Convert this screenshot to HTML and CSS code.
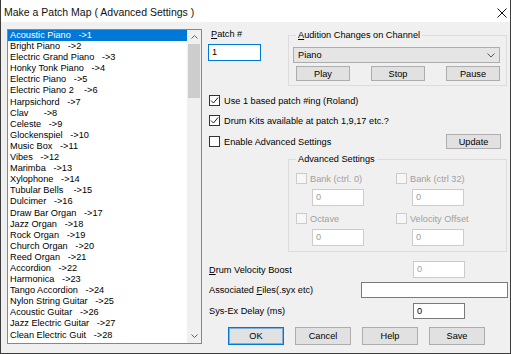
FILE: index.html
```html
<!DOCTYPE html>
<html>
<head>
    <link rel="stylesheet" href="styles.css">
</head>
<body>
<div class="window">
    <div class="titlebar">
        <span class="title">Make a Patch Map ( Advanced Settings )</span>
        <svg class="close" width="10" height="10" viewBox="0 0 10 10"><path d="M0.5 0.5 L9.5 9.5 M9.5 0.5 L0.5 9.5" stroke="#111" stroke-width="1" fill="none"/></svg>
    </div>
    <div class="content">
        <div class="list">
            <div class="items">
                <div class="item sel">Acoustic Piano   -&gt;1</div>
                <div class="item">Bright Piano   -&gt;2</div>
                <div class="item">Electric Grand Piano   -&gt;3</div>
                <div class="item">Honky Tonk Piano   -&gt;4</div>
                <div class="item">Electric Piano   -&gt;5</div>
                <div class="item">Electric Piano 2    -&gt;6</div>
                <div class="item">Harpsichord   -&gt;7</div>
                <div class="item">Clav      -&gt;8</div>
                <div class="item">Celeste   -&gt;9</div>
                <div class="item">Glockenspiel   -&gt;10</div>
                <div class="item">Music Box   -&gt;11</div>
                <div class="item">Vibes   -&gt;12</div>
                <div class="item">Marimba   -&gt;13</div>
                <div class="item">Xylophone   -&gt;14</div>
                <div class="item">Tubular Bells    -&gt;15</div>
                <div class="item">Dulcimer   -&gt;16</div>
                <div class="item">Draw Bar Organ   -&gt;17</div>
                <div class="item">Jazz Organ   -&gt;18</div>
                <div class="item">Rock Organ   -&gt;19</div>
                <div class="item">Church Organ   -&gt;20</div>
                <div class="item">Reed Organ   -&gt;21</div>
                <div class="item">Accordion   -&gt;22</div>
                <div class="item">Harmonica   -&gt;23</div>
                <div class="item">Tango Accordion   -&gt;24</div>
                <div class="item">Nylon String Guitar   -&gt;25</div>
                <div class="item">Acoustic Guitar   -&gt;26</div>
                <div class="item">Jazz Electric Guitar   -&gt;27</div>
                <div class="item">Clean Electric Guit   -&gt;28</div>
            </div>
            <div class="scroll">
                <div class="arrow"><svg width="7" height="4" viewBox="0 0 7 4"><path d="M0.5 3.5 L3.5 0.5 L6.5 3.5" stroke="#606060" fill="none"/></svg></div>
                <div class="thumb"></div>
                <div class="track"></div>
                <div class="arrow"><svg width="7" height="4" viewBox="0 0 7 4"><path d="M0.5 0.5 L3.5 3.5 L6.5 0.5" stroke="#606060" fill="none"/></svg></div>
            </div>
        </div>

        <div class="panel">
            <div class="toprow">
                <div class="patch">
                    <div class="lbl"><u>P</u>atch #</div>
                    <div class="edit focus patchedit">1</div>
                </div>
                <div class="group audition">
                    <span class="legend"><u>A</u>udition Changes on Channel</span>
                    <div class="combo">
                        <span>Piano</span>
                        <svg width="8" height="5" viewBox="0 0 8 5"><path d="M0.5 0.5 L4 4 L7.5 0.5" stroke="#555" fill="none"/></svg>
                    </div>
                    <div class="btnrow">
                        <button class="btn small">Play</button>
                        <button class="btn small">Stop</button>
                        <button class="btn small">Pause</button>
                    </div>
                </div>
            </div>

            <div class="check first">
                <span class="box"><svg width="9" height="9" viewBox="0 0 9 9"><path d="M1 4.5 L3.5 7 L8 1.5" stroke="#222" stroke-width="1" fill="none"/></svg></span>
                <span>Use 1 based patch #ing (Roland)</span>
            </div>
            <div class="check">
                <span class="box"><svg width="9" height="9" viewBox="0 0 9 9"><path d="M1 4.5 L3.5 7 L8 1.5" stroke="#222" stroke-width="1" fill="none"/></svg></span>
                <span>Drum Kits available at patch 1,9,17 etc.?</span>
            </div>
            <div class="check enable">
                <span class="box"></span>
                <span>Enable Advanced Settings</span>
                <button class="btn update">Update</button>
            </div>

            <div class="group advanced">
                <span class="legend">Advanced Settings</span>
                <div class="advgrid">
                    <div class="cell">
                        <div class="check off"><span class="box"></span><span>Bank (ctrl. 0)</span></div>
                        <div class="edit off small">0</div>
                    </div>
                    <div class="cell">
                        <div class="check off"><span class="box"></span><span>Bank (ctrl 32)</span></div>
                        <div class="edit off small">0</div>
                    </div>
                    <div class="cell">
                        <div class="check off"><span class="box"></span><span>Octave</span></div>
                        <div class="edit off small">0</div>
                    </div>
                    <div class="cell">
                        <div class="check off"><span class="box"></span><span>Velocity Offset</span></div>
                        <div class="edit off small">0</div>
                    </div>
                </div>
            </div>

            <div class="field drum">
                <span><u>D</u>rum Velocity Boost</span>
                <div class="edit off short">0</div>
            </div>
            <div class="field assoc">
                <span>Associated <u>F</u>iles(.syx etc)</span>
                <div class="edit long"></div>
            </div>
            <div class="field sysex">
                <span>Sys-Ex Delay (ms)</span>
                <div class="edit short">0</div>
            </div>

            <div class="buttons">
                <button class="btn dlg default">OK</button>
                <button class="btn dlg">Cancel</button>
                <button class="btn dlg">Help</button>
                <button class="btn dlg">Save</button>
            </div>
        </div>
    </div>
</div>
</body>
</html>
```

FILE: styles.css
```css
*
{
    box-sizing: border-box;
}
body
{
    margin: 0;
    font-family: "Liberation Sans", Arial, sans-serif;
    font-size: 9.2px;
    color: #000;
}
.window
{
    width: 511px;
    height: 354px;
    background-color: #f0f0f0;
    border: 1px solid #3c3c3c;
    border-top: none;
    display: flex;
    flex-direction: column;
}
.titlebar
{
    height: 22px;
    background-color: #fff;
    display: flex;
    align-items: center;
    padding-left: 3px;
    padding-top: 1px;
}
.title
{
    font-size: 10.5px;
    color: #111;
}
.close
{
    margin-left: auto;
    margin-right: 3px;
    margin-top: 2px;
}
.content
{
    display: flex;
    padding: 7px 0 0 6px;
}

/* list box */
.list
{
    width: 195px;
    height: 315px;
    border: 1px solid #828790;
    background-color: #fff;
    display: flex;
    overflow: hidden;
}
.items
{
    flex: 1;
    line-height: 11.1px;
    overflow: hidden;
}
.item
{
    padding-left: 2px;
    height: 11.1px;
    white-space: pre;
}
.item.sel
{
    background-color: #0078d7;
    color: #fff;
}
.scroll
{
    width: 14px;
    background-color: #f0f0f0;
    display: flex;
    flex-direction: column;
}
.arrow
{
    height: 14px;
    display: flex;
    align-items: center;
    justify-content: center;
}
.thumb
{
    height: 54px;
    margin: 0 1px;
    background-color: #cdcdcd;
}
.track
{
    flex: 1;
}

/* right side */
.panel
{
    margin-left: 6px;
    width: 300px;
}
.toprow
{
    display: flex;
    height: 57px;
}
.patch
{
    width: 80px;
}
.lbl
{
    line-height: 11px;
    margin-left: 3px;
}
.edit
{
    height: 16px;
    background-color: #fff;
    border: 1px solid #7a7a7a;
    padding-left: 3px;
    line-height: 14px;
}
.edit.focus
{
    border-color: #0078d7;
}
.patchedit
{
    margin-top: 4px;
    width: 53px;
    height: 17px;
}
.edit.off
{
    border-color: #cccccc;
    color: #a0a0a0;
}
.group
{
    border: 1px solid #dcdcdc;
}
.legend
{
    display: block;
    width: max-content;
    margin: -6px 0 0 7px;
    padding: 0 2px;
    line-height: 11px;
    background-color: #f0f0f0;
}
.audition
{
    margin-top: 6px;
    width: 219px;
    height: 51px;
}
.combo
{
    margin: 6px 0 0 4px;
    width: 207px;
    height: 16px;
    background-color: #e5e5e5;
    border: 1px solid #adadad;
    display: flex;
    align-items: center;
    justify-content: space-between;
    padding: 0 4px 0 4px;
}
.btnrow
{
    display: flex;
    gap: 21px;
    margin: 3px 0 0 7px;
}
.btn
{
    font-family: "Liberation Sans", Arial, sans-serif;
    font-size: 9.2px;
    font-weight: normal;
    color: #000;
    background-color: #e1e1e1;
    border: 1px solid #adadad;
    padding: 0;
    text-align: center;
}
.btn.small
{
    width: 54px;
    height: 15px;
}

/* check boxes */
.check
{
    display: flex;
    align-items: center;
    height: 13px;
    margin-top: 7px;
}
.check.first
{
    margin-top: 8px;
}
.box
{
    width: 11px;
    height: 11px;
    border: 1px solid #333;
    background-color: #fff;
    margin-left: 1px;
    margin-right: 4px;
    display: flex;
    align-items: center;
    justify-content: center;
}
.check.enable
{
    height: 15px;
}
.btn.update
{
    margin-left: auto;
    margin-right: 7px;
    width: 55px;
    height: 15px;
}
.check.off
{
    margin-top: 0;
    color: #a0a0a0;
}
.check.off .box
{
    border-color: #cccccc;
    background-color: #f7f7f7;
    margin-left: 0;
    margin-right: 3px;
}

/* advanced settings */
.advanced
{
    margin: 10px 0 0 80px;
    width: 219px;
    height: 93px;
}
.advgrid
{
    display: grid;
    grid-template-columns: 100px 100px;
    row-gap: 6px;
    margin-top: 7px;
    padding-left: 7px;
}
.edit.small
{
    margin: 4px 0 0 16px;
    width: 52px;
    height: 17px;
}

/* lower fields */
.field
{
    display: flex;
    align-items: center;
    justify-content: space-between;
    padding-left: 1px;
}
.drum
{
    margin-top: 9px;
}
.drum .edit
{
    height: 17px;
}
.assoc
{
    margin-top: 4px;
}
.sysex
{
    margin-top: 5px;
}
.edit.short
{
    width: 52px;
    margin-right: 43px;
}
.edit.long
{
    width: 147px;
}
.buttons
{
    display: flex;
    gap: 11px;
    margin: 8px 0 0 20px;
}
.btn.dlg
{
    width: 56px;
    height: 18px;
}
.btn.default
{
    border-color: #0078d7;
    box-shadow: inset 0 0 0 1px rgba(0, 120, 215, 0.45);
}
```
